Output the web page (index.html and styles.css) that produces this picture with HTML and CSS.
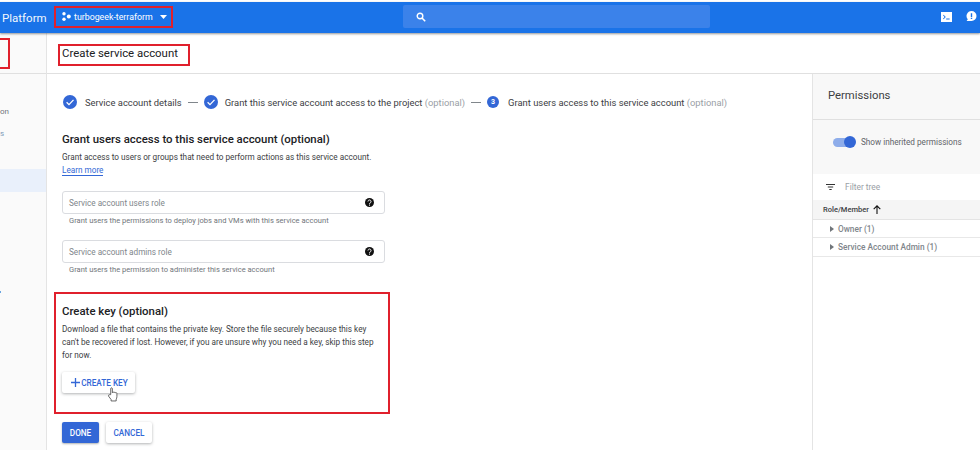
FILE: index.html
```html
<!DOCTYPE html>
<html lang="en">
<head>
<meta charset="utf-8">
<title>Create service account</title>
<link rel="stylesheet" href="styles.css">
</head>
<body>
<header class="topbar">
  <span class="brand">Platform</span>
  <div class="project">
    <svg class="project-icon" width="9" height="9" viewBox="0 0 9 9"><circle cx="2" cy="1.8" r="1.7"/><circle cx="2" cy="7.2" r="1.7"/><circle cx="6.8" cy="4.5" r="2"/></svg>
    <span class="project-name">turbogeek-terraform</span>
    <svg class="caret" width="7" height="4" viewBox="0 0 7 4"><path d="M0 0h7L3.5 4z"/></svg>
  </div>
  <div class="search">
    <svg width="10" height="10" viewBox="0 0 10 10"><circle cx="4" cy="4" r="2.8" fill="none" stroke="#fff" stroke-width="1.4"/><path d="M6 6l3.2 3.2" stroke="#fff" stroke-width="1.6"/></svg>
  </div>
  <div class="top-actions">
    <svg width="11" height="10" viewBox="0 0 11 10"><path fill="#fff" fill-rule="evenodd" d="M0 0h11v10H0zM2 3.2L3.6 5 2 6.8l.6.5L4.8 5 2.6 2.7zM5.2 6.6v.9h3.4v-.9z"/></svg>
    <svg width="11" height="11" viewBox="0 0 11 11"><path fill="#fff" fill-rule="evenodd" d="M5.500 0a5 5 0 0 1 5 5 5 5 0 0 1-5 5H.6L1.800 8.300A5 5 0 0 1 5.500 0zM4.800 2.200v3.800h1.400V2.200zM4.800 6.800v1.300h1.400V6.800z"/></svg>
  </div>
</header>

<div class="page">
  <aside class="sidebar">
    <div class="side-head"><span class="side-mark"></span></div>
    <nav class="side-nav">
      <span class="side-item side-on">on</span>
      <span class="side-item side-s">s</span>
      <span class="side-active"></span>
      <span class="side-tick"></span>
    </nav>
  </aside>

  <div class="content">
    <div class="title-bar"><h1 class="title">Create service account</h1></div>
    <div class="columns">
      <main class="main">
        <ol class="stepper">
          <li class="step">
            <svg class="check" width="14" height="14" viewBox="0 0 14 14"><circle cx="7" cy="7" r="7" fill="#3367d6"/><path d="M3.600 7.200l2.400 2.400 4.500-4.700" fill="none" stroke="#fff" stroke-width="1.300"/></svg>
            <span>Service account details</span>
          </li>
          <li class="dash"></li>
          <li class="step step-tight">
            <svg class="check" width="14" height="14" viewBox="0 0 14 14"><circle cx="7" cy="7" r="7" fill="#3367d6"/><path d="M3.600 7.200l2.400 2.400 4.500-4.700" fill="none" stroke="#fff" stroke-width="1.300"/></svg>
            <span>Grant this service account access to the project <em class="opt">(optional)</em></span>
          </li>
          <li class="dash"></li>
          <li class="step step-wide">
            <span class="num">3</span>
            <span>Grant users access to this service account <em class="opt">(optional)</em></span>
          </li>
        </ol>

        <section class="grant">
          <h2 class="heading">Grant users access to this service account (optional)</h2>
          <p class="desc">Grant access to users or groups that need to perform actions as this service account.<br><a class="link">Learn more</a></p>
          <div class="field">
            <span class="field-label">Service account users role</span>
            <svg class="help" width="9" height="9" viewBox="0 0 10 10"><circle cx="5" cy="5" r="5"/><path d="M3.300 3.900a1.700 1.700 0 1 1 2.700 1.400c-.6.400-1 .6-1 1.300M5 7.300v1.200" fill="none" stroke="#fff" stroke-width="1.100"/></svg>
          </div>
          <p class="hint">Grant users the permissions to deploy jobs and VMs with this service account</p>
          <div class="field">
            <span class="field-label">Service account admins role</span>
            <svg class="help" width="9" height="9" viewBox="0 0 10 10"><circle cx="5" cy="5" r="5"/><path d="M3.300 3.900a1.700 1.700 0 1 1 2.700 1.400c-.6.400-1 .6-1 1.300M5 7.300v1.200" fill="none" stroke="#fff" stroke-width="1.100"/></svg>
          </div>
          <p class="hint">Grant users the permission to administer this service account</p>
        </section>

        <section class="key">
          <h2 class="heading key-heading">Create key (optional)</h2>
          <p class="key-text">Download a file that contains the private key. Store the file securely because this key can't be recovered if lost. However, if you are unsure why you need a key, skip this step for now.</p>
          <button class="btn btn-key" type="button">
            <svg width="9" height="9" viewBox="0 0 9 9"><path d="M4.500 0v9M0 4.500h9" stroke="#3367d6" stroke-width="1.300"/></svg>
            CREATE KEY
            <svg class="hand" width="10" height="15" viewBox="0 0 11 16"><path fill="#fff" stroke="#333" stroke-width=".8" stroke-linejoin="round" d="M3 8V1.600c0-1.300 1.800-1.300 1.800 0V6c.2-1 1.700-1 1.800 0 .3-.8 1.600-.7 1.700.2.400-.5 1.500-.3 1.500.7v3.600c0 1.200-.4 1.900-.8 2.600v2H3.400v-1.600L.6 9.800C0 8.700 1.300 7.700 2.200 8.600z"/></svg>
          </button>
        </section>

        <div class="actions">
          <button class="btn btn-done" type="button">DONE</button>
          <button class="btn btn-cancel" type="button">CANCEL</button>
        </div>
      </main>

      <aside class="perms">
        <div class="perms-head">Permissions</div>
        <div class="perms-toggle">
          <span class="switch"><span class="thumb"></span></span>
          <span class="toggle-label">Show inherited permissions</span>
        </div>
        <div class="filter">
          <svg width="9" height="6" viewBox="0 0 9 6"><path d="M0 .5h9M1.800 3h5.400M3.300 5.500h2.400" stroke="#333" stroke-width="1"/></svg>
          <span>Filter tree</span>
        </div>
        <div class="tree-head">
          <span>Role/Member</span>
          <svg width="8" height="9" viewBox="0 0 8 9"><path d="M4 9V1M.7 4.200L4 .9l3.300 3.300" fill="none" stroke="#111" stroke-width="1.100"/></svg>
        </div>
        <div class="tree-row"><i class="tri"></i>Owner (1)</div>
        <div class="tree-row"><i class="tri"></i>Service Account Admin (1)</div>
      </aside>
    </div>
  </div>
</div>
</body>
</html>
```

FILE: styles.css
```css
* { box-sizing: border-box; }

html, body {
  margin: 0;
  height: 450px;
  overflow: hidden;
}

body {
  background: #fff;
  font-family: Roboto, "Liberation Sans", sans-serif;
  color: #3c4043;
  padding-top: 2px;
  display: flex;
  flex-direction: column;
}

/* top bar */
.topbar {
  flex: none;
  height: 31px;
  background: #1a73e8;
  color: #fff;
  display: flex;
  align-items: center;
  padding-left: 2px;
  box-shadow: 0 1px 2px rgba(60, 64, 67, .55);
  position: relative;
  z-index: 2;
}

.brand {
  font-size: 11.500px;
  width: 45px;
  opacity: .95;
}

.project {
  margin-left: 7px;
  width: 119px;
  height: 22px;
  border: 2px solid #e0202c;
  display: flex;
  align-items: center;
  padding-left: 6px;
  margin-top: -2px;
}

.project-icon { fill: #fff; flex: none; }
.project-name { font-size: 8.800px; margin-left: 3px; white-space: nowrap; }
.caret { fill: #fff; margin-left: 7px; flex: none; }

.search {
  margin-left: 230px;
  width: 307px;
  height: 23px;
  margin-top: -2px;
  border-radius: 2px;
  background: #3b82ea;
  display: flex;
  align-items: center;
  padding-left: 13px;
}

.top-actions {
  margin-left: 231px;
  display: flex;
  align-items: center;
  gap: 14px;
  margin-top: -2px;
}

/* page frame */
.page {
  flex: 1;
  display: flex;
  min-height: 0;
}

.sidebar {
  flex: none;
  width: 47px;
  background: #fafafa;
  border-right: 1px solid #e4e4e4;
}

.side-head {
  height: 41px;
  border-bottom: 1px solid #e0e0e0;
  padding-top: 5px;
}

.side-mark {
  display: block;
  width: 10px;
  height: 31px;
  border: 2px solid #e0202c;
  border-left: 0;
}

.side-nav {
  display: flex;
  flex-direction: column;
}

.side-item {
  font-size: 8px;
  line-height: 10px;
  color: #70757a;
}

.side-on { margin-top: 33px; }
.side-s { margin-top: 12px; color: #7f9ab8; }

.side-active {
  height: 23px;
  margin-top: 30px;
  background: #e9f0fb;
}

.side-tick {
  width: 1px;
  height: 2px;
  margin-top: 99px;
  background: #6aa5e0;
}

.content {
  flex: 1;
  min-width: 0;
  display: flex;
  flex-direction: column;
}

.title-bar {
  flex: none;
  height: 41px;
  border-bottom: 1px solid #e0e0e0;
  padding: 11px 0 0 11px;
}

.title {
  margin: 0;
  width: 132px;
  height: 22px;
  border: 2px solid #e0202c;
  font-size: 11.400px;
  font-weight: 400;
  line-height: 14px;
  color: #202124;
  padding: 0 0 0 2px;
  white-space: nowrap;
}

.columns {
  flex: 1;
  display: flex;
  min-height: 0;
}

.main {
  width: 765px;
  flex: none;
  padding: 21px 0 0 15px;
  overflow: hidden;
}

/* stepper */
.stepper {
  list-style: none;
  margin: 0;
  padding: 0 0 0 1px;
  height: 14px;
  display: flex;
  align-items: center;
  font-size: 9.400px;
  color: #3c4043;
  white-space: nowrap;
}

.step {
  display: flex;
  align-items: center;
  gap: 8px;
}

.step-tight { gap: 7px; }
.step-wide { gap: 9px; }

.dash {
  width: 10px;
  height: 1px;
  background: #80868b;
  margin: 0 6px;
}

.check { flex: none; }

.num {
  width: 12px;
  height: 12px;
  border-radius: 50%;
  background: #3367d6;
  color: #fff;
  font-size: 7px;
  font-weight: 700;
  text-align: center;
  line-height: 12px;
}

.opt {
  font-style: normal;
  color: #9aa0a6;
}

/* sections */
.heading {
  margin: 0;
  font-size: 11.400px;
  font-weight: 500;
  line-height: 14px;
  color: #202124;
}

.grant { margin-top: 23px; }

.desc {
  margin: 5px 0 0;
  font-size: 8.200px;
  line-height: 13px;
  color: #3c4043;
}

.link {
  color: #3367d6;
  border-bottom: 1px solid #3367d6;
}

.field {
  margin-top: 14px;
  width: 323px;
  height: 23px;
  border: 1px solid #dadce0;
  border-radius: 3px;
  display: flex;
  align-items: center;
  justify-content: space-between;
  padding: 0 10px 0 6px;
}

.field-label {
  font-size: 8.200px;
  color: #80868b;
}

.help { fill: #111; flex: none; }

.hint {
  margin: 1px 0 0 7px;
  font-size: 7.550px;
  line-height: 11px;
  color: #70757a;
}

/* create key */
.key {
  margin: 17px 0 0 -8px;
  width: 336px;
  height: 122px;
  border: 2px solid #e0202c;
  padding: 10px 6px 0;
}

.key-text {
  margin: 5px 0 0;
  font-size: 8.200px;
  line-height: 13px;
  color: #3c4043;
}

.btn {
  font-family: inherit;
  font-weight: 500;
  font-size: 8.200px;
  border: 0;
  border-radius: 2px;
  cursor: pointer;
  padding: 0;
}

.btn-key {
  position: relative;
  margin-top: 10px;
  width: 73px;
  height: 21px;
  background: #fff;
  color: #3367d6;
  box-shadow: 0 1px 3px rgba(60, 64, 67, .4);
  display: flex;
  align-items: center;
  justify-content: center;
  gap: 1px;
  padding-left: 2px;
}

.hand {
  position: absolute;
  left: 46px;
  top: 15px;
}

.actions {
  margin-top: 8px;
  display: flex;
  gap: 7px;
}

.btn-done {
  width: 37px;
  height: 21px;
  background: #3367d6;
  color: #fff;
  box-shadow: 0 1px 2px rgba(60, 64, 67, .4);
}

.btn-cancel {
  width: 46px;
  height: 21px;
  background: #fff;
  color: #3367d6;
  box-shadow: 0 1px 3px rgba(60, 64, 67, .4);
}

/* permissions */
.perms {
  flex: 1;
  border-left: 1px solid #e4e4e4;
  display: flex;
  flex-direction: column;
  background: #fff;
}

.perms-head {
  height: 46px;
  background: #f8f8f8;
  border-bottom: 1px solid #e0e0e0;
  padding-left: 15px;
  line-height: 44px;
  font-size: 11.300px;
  color: #3c4043;
}

.perms-toggle {
  height: 54px;
  background: #f8f8f8;
  display: flex;
  align-items: center;
  padding: 0 0 10px 20px;
}

.switch {
  width: 19px;
  height: 9px;
  border-radius: 5px;
  background: #8eadea;
  position: relative;
  flex: none;
}

.thumb {
  position: absolute;
  right: -4px;
  top: -1.500px;
  width: 12px;
  height: 12px;
  border-radius: 50%;
  background: #3367d6;
}

.toggle-label {
  margin-left: 9px;
  font-size: 8.200px;
  color: #5f6368;
  white-space: nowrap;
}

.filter {
  height: 26px;
  display: flex;
  align-items: center;
  gap: 10px;
  padding-left: 13px;
  font-size: 8.400px;
  color: #9aa0a6;
}

.tree-head {
  height: 20px;
  background: #f5f5f5;
  border-bottom: 1px solid #e4e4e4;
  display: flex;
  align-items: center;
  gap: 4px;
  padding-left: 10px;
  font-size: 7.500px;
  font-weight: 500;
  color: #3c4043;
}

.tree-row {
  height: 18px;
  border-bottom: 1px solid #e8e8e8;
  display: flex;
  align-items: center;
  padding-left: 17px;
  font-size: 8.300px;
  font-weight: 500;
  color: #80868b;
  white-space: nowrap;
}

.tree-row + .tree-row { height: 19px; }

.tri {
  width: 0;
  height: 0;
  border-left: 4px solid #70757a;
  border-top: 3.500px solid transparent;
  border-bottom: 3.500px solid transparent;
  margin-right: 4px;
}
```
